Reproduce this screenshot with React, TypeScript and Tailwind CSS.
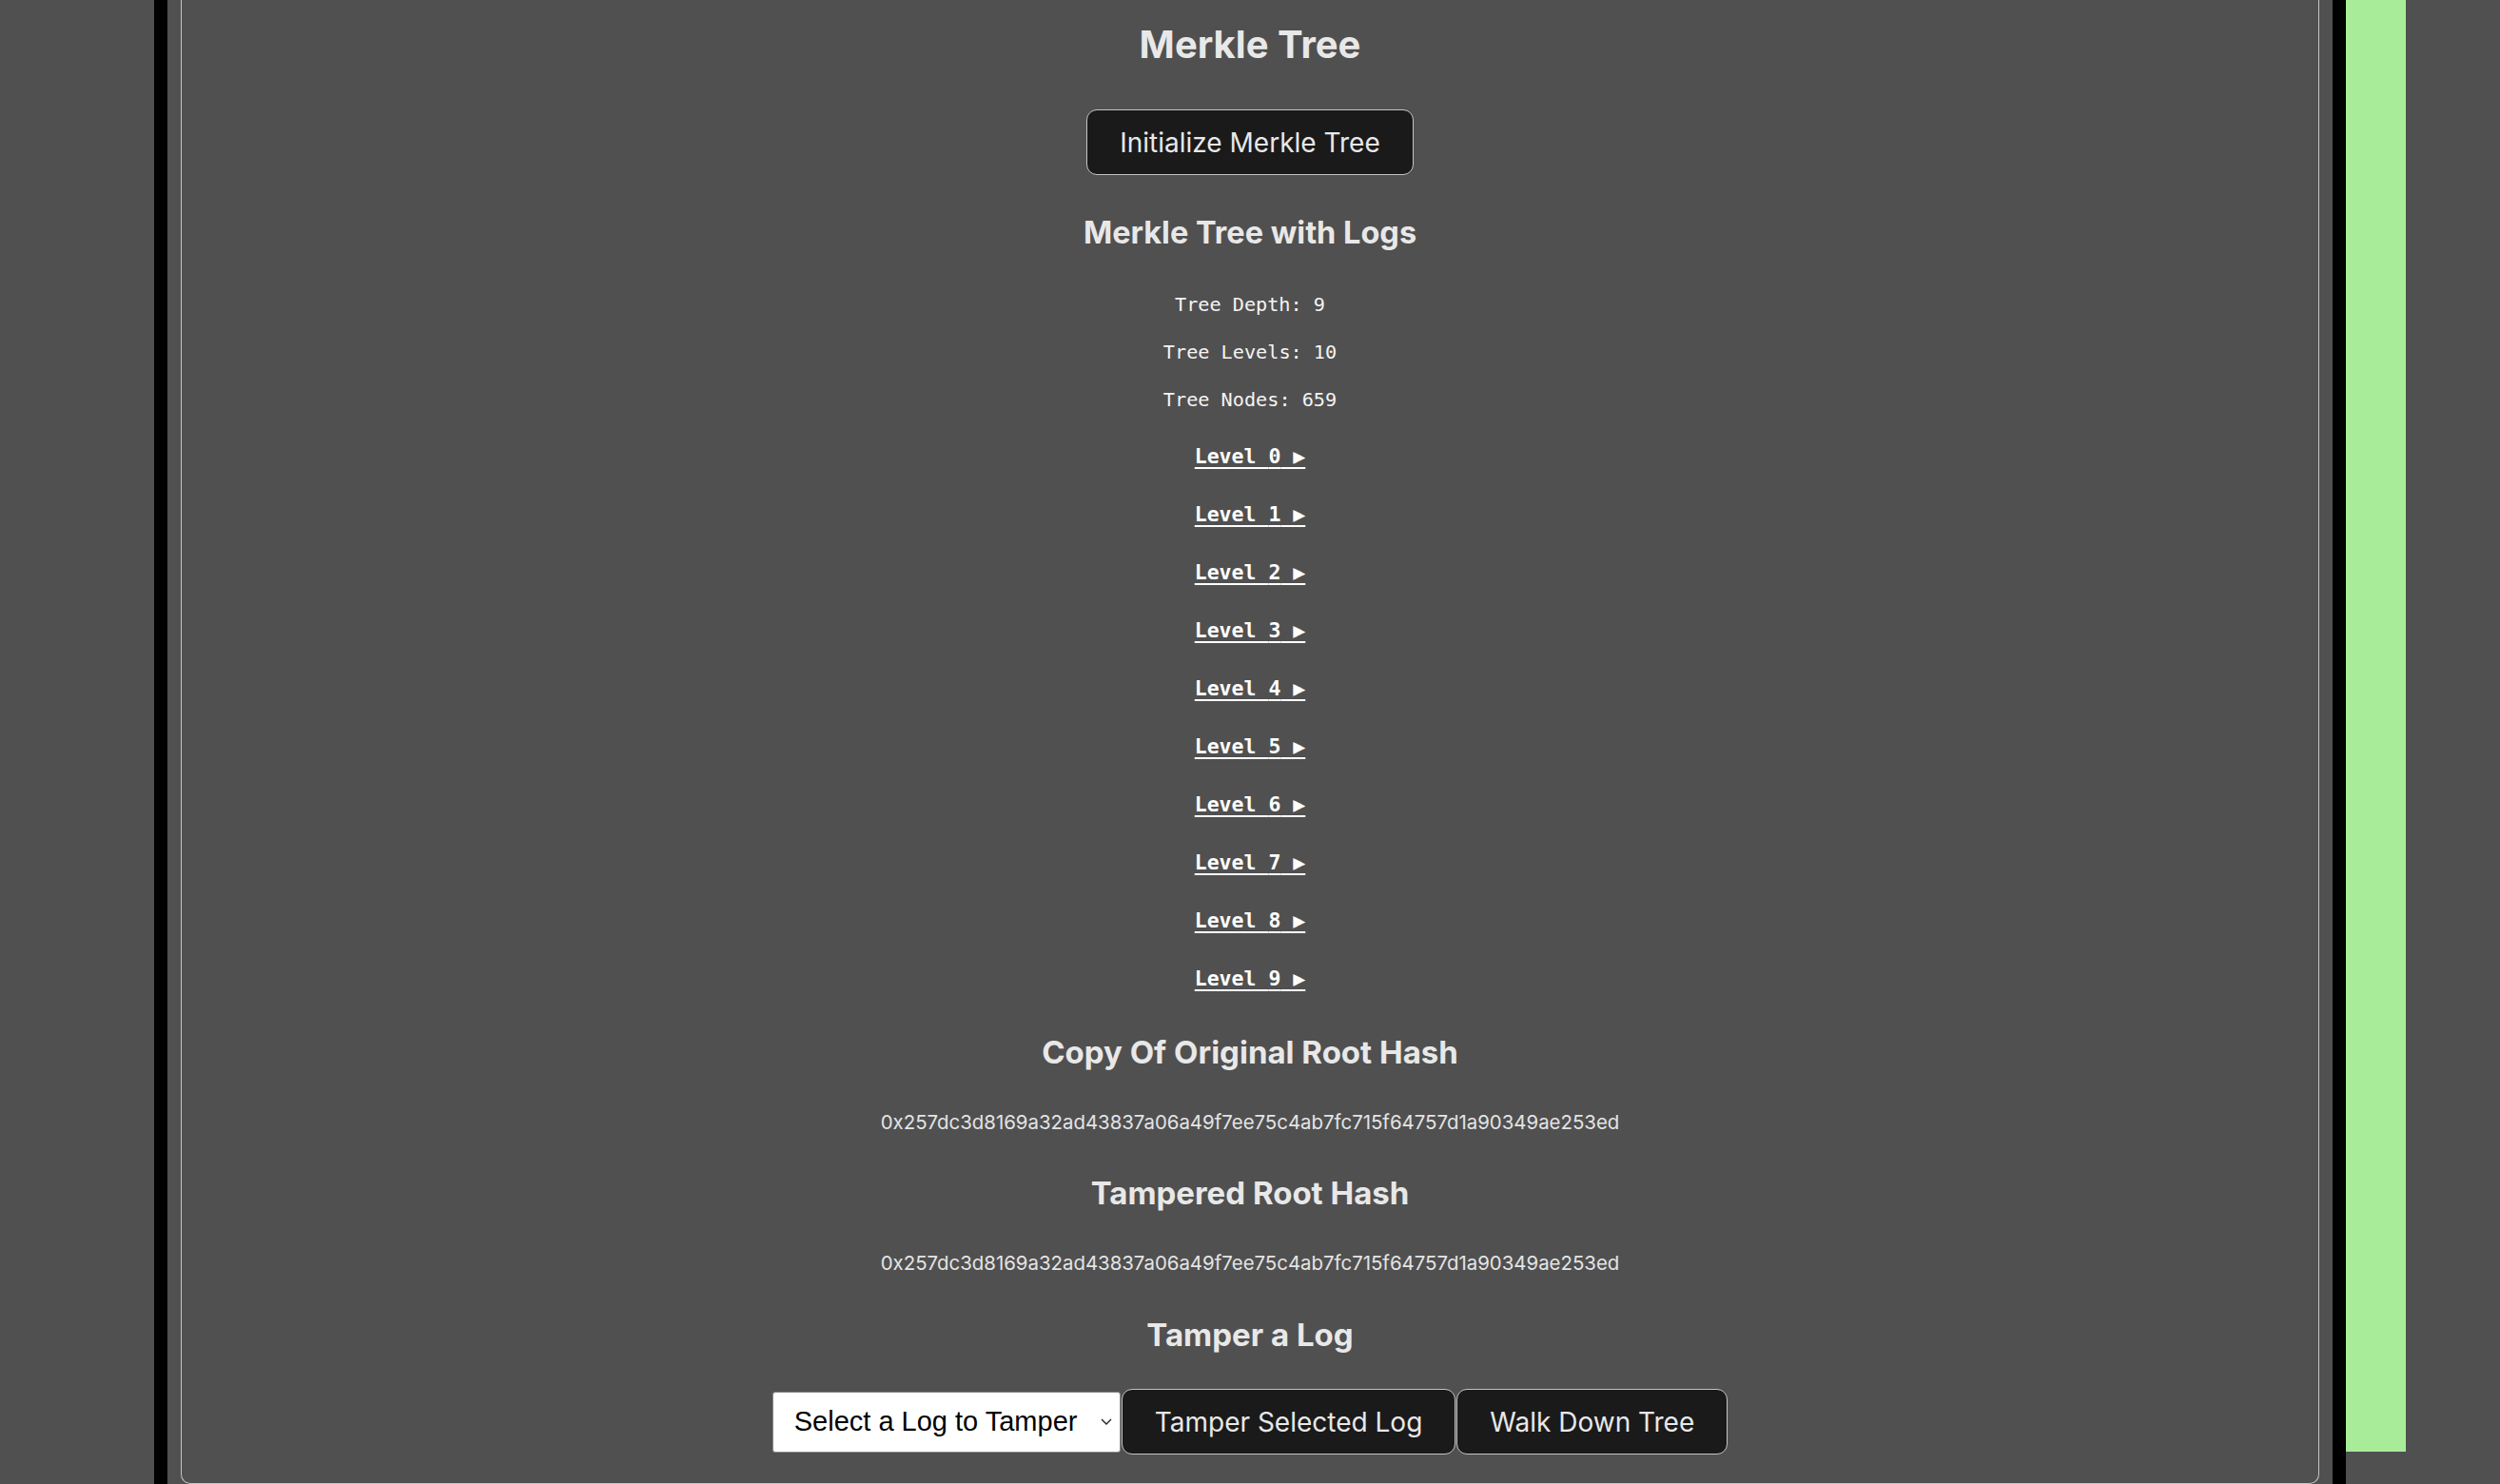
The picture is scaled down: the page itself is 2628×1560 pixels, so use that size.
import React from "react";

const rootHash = "0x257dc3d8169a32ad43837a06a49f7ee75c4ab7fc715f64757d1a90349ae253ed";
const levels = [0, 1, 2, 3, 4, 5, 6, 7, 8, 9];

const sans = "font-['Inter',_'Noto_Sans',_sans-serif]";
const mono = "font-['DejaVu_Sans_Mono',_'Liberation_Mono',_monospace]";

const DarkButton = ({ children }: { children: React.ReactNode }) => (
  <button
    className={`${sans} h-[69px] rounded-[11px] border border-[#c4c4c4] bg-[#1a1a1a] px-[34px] text-[28px] leading-[40px] text-[#e8e8e8]`}
  >
    {children}
  </button>
);

const App = () => {
  return (
    <div className="flex min-h-screen bg-[#505050]">
      <div className="w-[162px] shrink-0" />

      <div className="flex w-[2304px] shrink-0 border-x-[14px] border-black px-[14px]">
        <section
          className={`${sans} flex w-full flex-col items-center rounded-b-[10px] border-x border-b border-[#c4c4c4] pt-[23px] pb-[30px] text-[#e8e8e8]`}
        >
          <h1 className="text-[40px] leading-[48px] font-bold">Merkle Tree</h1>

          <div className="mt-[44px]">
            <DarkButton>Initialize Merkle Tree</DarkButton>
          </div>

          <h2 className="mt-[41px] text-[32.5px] leading-[40px] font-bold">Merkle Tree with Logs</h2>

          <div className={`${mono} mt-[40px] flex flex-col items-center gap-[20px] text-[20.2px] leading-[30px] text-[#f4f4f4]`}>
            <p>Tree Depth: 9</p>
            <p>Tree Levels: 10</p>
            <p>Tree Nodes: 659</p>
          </div>

          <div className={`${mono} mt-[30px] flex flex-col items-center gap-[31px] text-[21.5px] leading-[30px] font-bold text-white`}>
            {levels.map((level) => (
              <span key={level} className="cursor-pointer underline decoration-2 underline-offset-[4px]">
                Level {level} ▶
              </span>
            ))}
          </div>

          <h2 className="mt-[44px] text-[33px] leading-[36px] font-bold">Copy Of Original Root Hash</h2>
          <p className="mt-[42px] text-[20.4px] leading-[28px] text-[#e4e4e4]">{rootHash}</p>

          <h2 className="mt-[42px] text-[33px] leading-[36px] font-bold">Tampered Root Hash</h2>
          <p className="mt-[42px] text-[20.4px] leading-[28px] text-[#e4e4e4]">{rootHash}</p>

          <h2 className="mt-[43px] text-[33px] leading-[36px] font-bold">Tamper a Log</h2>

          <div className="mt-[39px] flex items-center gap-[1px]">
            <div className="relative">
              <select
                defaultValue=""
                className="h-[64px] w-[366px] appearance-none rounded-[3px] border border-[#8a8a8a] bg-white pl-[22px] pr-[40px] font-['Liberation_Sans',_Arial,_sans-serif] text-[29px] text-black"
              >
                <option value="">Select a Log to Tamper</option>
              </select>
              <svg
                className="pointer-events-none absolute top-[27px] right-[9px]"
                width="12"
                height="9"
                viewBox="0 0 12 9"
                fill="none"
                stroke="#222"
                strokeWidth="1.4"
              >
                <path d="M1 2l5 5 5-5" />
              </svg>
            </div>
            <DarkButton>Tamper Selected Log</DarkButton>
            <DarkButton>Walk Down Tree</DarkButton>
          </div>
        </section>
      </div>

      <div className="h-[1526px] w-[63px] shrink-0 bg-[#a8ec9a]" />
    </div>
  );
};

export default App;
